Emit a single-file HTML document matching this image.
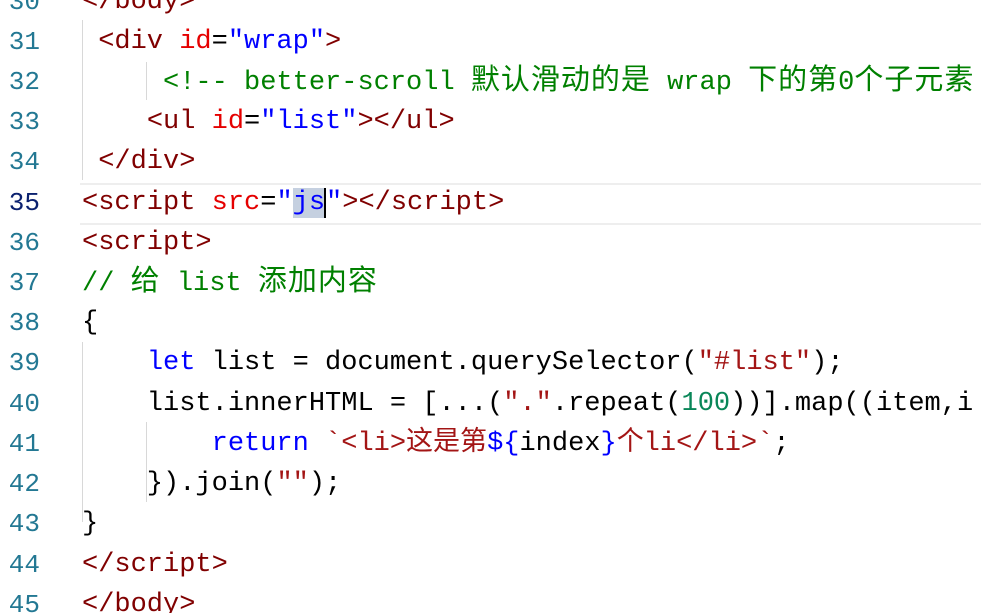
<!DOCTYPE html>
<html><head><meta charset="utf-8"><style>
body{margin:0;width:981px;height:613px;overflow:hidden;background:#fff;position:relative;font-family:"Liberation Mono","Noto Sans CJK SC",monospace;font-size:27px;}
.wrap{position:absolute;left:0;top:0;width:981px;height:613px;overflow:hidden}
.l{position:absolute;left:0;height:40px;line-height:40px;white-space:pre;width:981px;overflow:hidden}
.n{position:absolute;right:941px;color:#237893;font-size:26px}
.c{position:absolute;left:82px}
.t{color:#800000}.a{color:#e50000}.v{color:#0000ff}.g{color:#008000}.k{color:#0000ff}.s{color:#a31515}.num{color:#098658}
.cj{font-size:29px;letter-spacing:1px}
.hl{position:absolute;left:80px;top:183px;width:901px;height:38px;border-top:2px solid #eee;border-bottom:2px solid #eee}
.guide{position:absolute;width:1px;background:#d8d8d8}
</style></head><body><div class="wrap">
<div class="hl"></div>
<div class="guide" style="left:82px;top:20px;height:160px"></div>
<div class="guide" style="left:146px;top:62px;height:38px"></div>
<div class="guide" style="left:146px;top:422px;height:80px"></div>
<div class="guide" style="left:82px;top:342px;height:180px"></div>
<div class="l" style="top:-18px"><span class="n">30</span><span class="c"><span class="t">&lt;/body&gt;</span></span></div>
<div class="l" style="top:22px"><span class="n">31</span><span class="c"> <span class="t">&lt;div</span> <span class="a">id</span>=<span class="v">"wrap"</span><span class="t">&gt;</span></span></div>
<div class="l" style="top:62px"><span class="n">32</span><span class="c">     <span class="g">&lt;!-- better-scroll <span class="cj">默认滑动的是</span> wrap <span class="cj">下的第</span>0<span class="cj">个子元素</span></span></span></div>
<div class="l" style="top:102px"><span class="n">33</span><span class="c">    <span class="t">&lt;ul</span> <span class="a">id</span>=<span class="v">"list"</span><span class="t">&gt;&lt;/ul&gt;</span></span></div>
<div class="l" style="top:142px"><span class="n">34</span><span class="c"> <span class="t">&lt;/div&gt;</span></span></div>
<div class="l" style="top:183px"><span class="n" style="color:#0b216f">35</span><span class="c"><span class="t">&lt;script</span> <span class="a">src</span>=<span class="v">"<span style="background:#c5d0e0">js</span><span style="border-left:2px solid #000;margin-left:-1px">"</span></span><span class="t">&gt;&lt;/script&gt;</span></span></div>
<div class="l" style="top:223px"><span class="n">36</span><span class="c"><span class="t">&lt;script&gt;</span></span></div>
<div class="l" style="top:263px"><span class="n">37</span><span class="c"><span class="g">// <span class="cj">给</span> list <span class="cj">添加内容</span></span></span></div>
<div class="l" style="top:303px"><span class="n">38</span><span class="c">{</span></div>
<div class="l" style="top:343px"><span class="n">39</span><span class="c">    <span class="k">let</span> list = document.querySelector(<span class="s">"#list"</span>);</span></div>
<div class="l" style="top:384px"><span class="n">40</span><span class="c">    list.innerHTML = [...(<span class="s">"."</span>.repeat(<span class="num">100</span>))].map((item,i</span></div>
<div class="l" style="top:424px"><span class="n">41</span><span class="c">        <span class="k">return</span> <span class="s">`&lt;li&gt;这是第</span><span class="k">${</span>index<span class="k">}</span><span class="s">个li&lt;/li&gt;`</span>;</span></div>
<div class="l" style="top:464px"><span class="n">42</span><span class="c">    }).join(<span class="s">""</span>);</span></div>
<div class="l" style="top:504px"><span class="n">43</span><span class="c">}</span></div>
<div class="l" style="top:545px"><span class="n">44</span><span class="c"><span class="t">&lt;/script&gt;</span></span></div>
<div class="l" style="top:585px"><span class="n">45</span><span class="c"><span class="t">&lt;/body&gt;</span></span></div>
</div></body></html>
